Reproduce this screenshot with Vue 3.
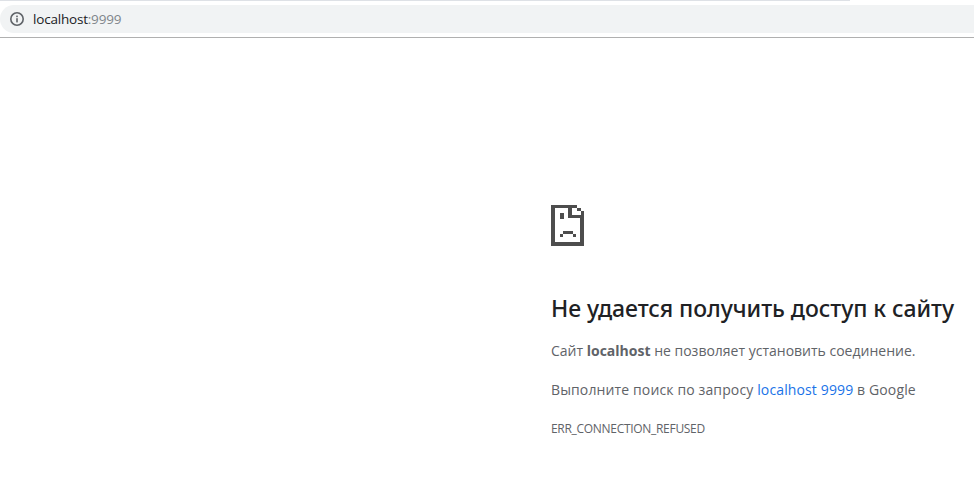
<script setup>
</script>

<template>
  <div class="page">
    <div class="topline"></div>
    <header class="bar">
      <div class="omnibox">
        <svg class="info" width="14" height="14" viewBox="0 0 14 14" fill="none">
          <circle cx="7" cy="7" r="6.2" stroke="#5f6368" stroke-width="1.6" />
          <rect x="6.2" y="6.2" width="1.6" height="4.2" fill="#5f6368" />
          <rect x="6.2" y="3.6" width="1.6" height="1.6" fill="#5f6368" />
        </svg>
        <span class="host">localhost</span><span class="port">:9999</span>
      </div>
    </header>
    <main class="content">
      <svg class="sad" width="33" height="41" viewBox="0 0 33 41" shape-rendering="crispEdges" fill="#4d4d4d">
        <path d="M0 0H26V3H4V37H29V13H33V41H0Z" />
        <path d="M26 3H30V6H26ZM30 6H33V10H30ZM17 3H21V10H33V13H17Z" />
        <rect x="9" y="8" width="4" height="6" />
        <path d="M12 26H22V29H12ZM9 29H12V32H9ZM22 29H25V32H22Z" />
      </svg>
      <h1>Не удается получить доступ к сайту</h1>
      <p class="line first">Сайт <b>localhost</b> не позволяет установить соединение.</p>
      <p class="line second">Выполните поиск по запросу <a>localhost 9999</a> в Google</p>
      <p class="code">ERR_CONNECTION_REFUSED</p>
    </main>
  </div>
</template>

<style>
html, body { margin: 0; background: #fff; }
</style>

<style scoped>
.page {
  width: 974px;
  height: 491px;
  overflow: hidden;
  background: #fff;
  font-family: "Open Sans", "Noto Sans", sans-serif;
}
.topline {
  width: 850px;
  height: 1px;
  background: #dee1e6;
}
.bar {
  height: 37px;
  padding-top: 4px;
  box-sizing: border-box;
  border-bottom: 1px solid #b0b0b0;
}
.omnibox {
  height: 28px;
  background: #f1f3f4;
  border-radius: 14px 0 0 14px;
  display: flex;
  align-items: center;
  padding-left: 10px;
  font-size: 13.5px;
  letter-spacing: -0.2px;
}
.info { margin-right: 9px; }
.host { color: #202124; }
.port { color: #80868b; }
.content {
  padding: 167px 0 0 551px;
}
.sad { display: block; }
h1 {
  margin: 47px 0 0;
  font-family: "Noto Sans", "Open Sans", sans-serif;
  font-size: 23px;
  line-height: 30px;
  font-weight: 500;
  letter-spacing: -0.05px;
  color: #202124;
  white-space: nowrap;
}
.line {
  margin: 0;
  font-size: 14px;
  line-height: 20px;
  color: #5f6368;
  white-space: nowrap;
}
.first { margin-top: 18px; }
.second { margin-top: 19px; letter-spacing: 0.13px; }
b { font-weight: 700; }
a { color: #1a73e8; }
.code {
  margin: 21px 0 0;
  font-size: 12px;
  line-height: 16px;
  letter-spacing: -0.3px;
  color: #5f6368;
}
</style>
